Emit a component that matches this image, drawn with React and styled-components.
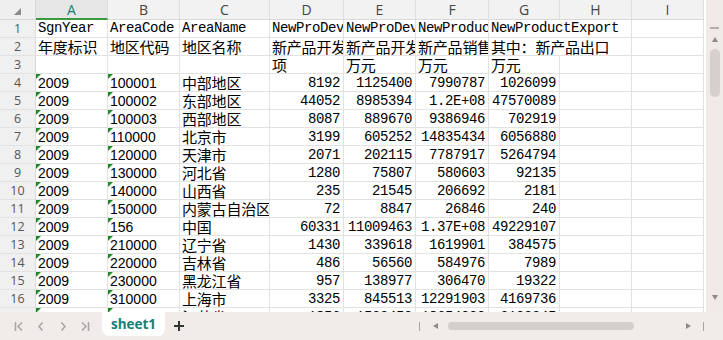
import React from 'react'
import styled, { createGlobalStyle, css } from 'styled-components'

const GlobalStyle = createGlobalStyle`
  html, body, #root { margin: 0; padding: 0; height: 100%; }
  body { overflow: hidden; background: #fff; font-family: "Liberation Sans", Arial, sans-serif; }
`

const COLS = ['A', 'B', 'C', 'D', 'E', 'F', 'G', 'H', 'I']

const data = [
  [['SgnYear', 'mono'], ['AreaCode', 'mono'], ['AreaName', 'mono'], ['NewProDevProjects', 'mono'], ['NewProDevExpenditure', 'mono'], ['NewProductSales', 'mono'], ['NewProductExport', 'mono', true]],
  [['年度标识', 'cjk'], ['地区代码', 'cjk'], ['地区名称', 'cjk'], ['新产品开发项目数', 'cjk'], ['新产品开发经费支出', 'cjk'], ['新产品销售收入', 'cjk'], ['其中：新产品出口', 'cjk', true]],
  [['', 'mono'], ['', 'mono'], ['', 'mono'], ['项', 'cjk'], ['万元', 'cjk'], ['万元', 'cjk'], ['万元', 'cjk']],
]

const values = [
  ['100001', '中部地区', '8192', '1125400', '7990787', '1026099'],
  ['100002', '东部地区', '44052', '8985394', '1.2E+08', '47570089'],
  ['100003', '西部地区', '8087', '889670', '9386946', '702919'],
  ['110000', '北京市', '3199', '605252', '14835434', '6056880'],
  ['120000', '天津市', '2071', '202115', '7787917', '5264794'],
  ['130000', '河北省', '1280', '75807', '580603', '92135'],
  ['140000', '山西省', '235', '21545', '206692', '2181'],
  ['150000', '内蒙古自治区', '72', '8847', '26846', '240'],
  ['156', '中国', '60331', '11009463', '1.37E+08', '49229107'],
  ['210000', '辽宁省', '1430', '339618', '1619901', '384575'],
  ['220000', '吉林省', '486', '56560', '584976', '7989'],
  ['230000', '黑龙江省', '957', '138977', '306470', '19322'],
  ['310000', '上海市', '3325', '845513', '12291903', '4169736'],
  ['320000', '江苏省', '1856', '1523450', '18654320', '6102345'],
]

values.forEach(v => {
  data.push([
    ['2009', 'text'], [v[0], 'text'], [v[1], 'cjk'],
    [v[2], 'num'], [v[3], 'num'], [v[4], 'num'], [v[5], 'num'],
  ])
})

const Page = styled.div`
  width: 723px;
  height: 100vh;
  display: flex;
  flex-direction: column;
  overflow: hidden;
`

const Main = styled.div`
  flex: 1;
  min-height: 0;
  display: flex;
`

const Sheet = styled.div`
  flex: 1;
  overflow: hidden;
  display: grid;
  grid-template-columns: 36px 72px 72px 90px 74px 72px 73px 71px 72px 1fr;
  grid-auto-rows: 18px;
  grid-template-rows: 20px;
  align-content: start;
  background: #fff;
`

const Corner = styled.div`
  background: #efefef;
  border-right: 1px solid #d9d9d9;
  border-bottom: 1px solid #d9d9d9;
  box-sizing: border-box;
  position: relative;
  &::after {
    content: '';
    position: absolute;
    left: 14px;
    top: 8px;
    border-style: solid;
    border-width: 0 0 7px 7px;
    border-color: transparent transparent #8a8a8a transparent;
  }
`

const ColHead = styled.div`
  box-sizing: border-box;
  display: flex;
  align-items: center;
  justify-content: center;
  font-family: "Open Sans", "Noto Sans", sans-serif;
  font-size: 14px;
  color: #444;
  background: #f2f2f2;
  border-right: 1px solid #dedede;
  border-bottom: 1px solid #d9d9d9;
  ${p => p.$active && css`
    color: #17806f;
    background: #e6e6e6;
    border-bottom: 2px solid #3b9a3b;
  `}
`

const RowHead = styled.div`
  box-sizing: border-box;
  display: flex;
  align-items: center;
  justify-content: center;
  font-family: "Open Sans", "Noto Sans", sans-serif;
  font-size: 12.5px;
  color: #555;
  background: #f0f0f0;
  border-right: 1px solid #d9d9d9;
  border-bottom: 1px solid #e2e2e2;
`

const Cell = styled.div`
  box-sizing: border-box;
  position: relative;
  border-right: 1px solid #e2e2e2;
  border-bottom: 1px solid #e2e2e2;
  white-space: nowrap;
  overflow: hidden;
  line-height: 17px;
  color: #000;
  padding: 0 2px;
  font-family: "Liberation Mono", "Courier New", monospace;
  font-size: 14px;
  letter-spacing: -0.4px;
  ${p => p.$kind === 'cjk' && css`
    font-family: "Noto Sans CJK SC", sans-serif;
    font-size: 15px;
    letter-spacing: -0.2px;
  `}
  ${p => p.$kind === 'text' && css`
    font-family: "Liberation Sans", Arial, sans-serif;
    font-size: 14px;
    letter-spacing: 0;
    padding-top: 1px;
    line-height: 16px;
    &::before {
      content: '';
      position: absolute;
      left: 0;
      top: 0;
      border-style: solid;
      border-width: 5px 5px 0 0;
      border-color: #1f8a2a transparent transparent transparent;
    }
  `}
  ${p => p.$kind === 'num' && css`
    text-align: right;
    padding-right: 3px;
    padding-top: 1px;
    line-height: 16px;
  `}
  ${p => p.$spill && css`
    overflow: visible;
    border-right-color: transparent;
    z-index: 1;
  `}
`

const VScroll = styled.div`
  width: 17px;
  margin-left: 2px;
  background: #efe9e7;
  display: flex;
  flex-direction: column;
  align-items: center;
  padding-top: 27px;
  box-sizing: border-box;
`

const Dash = styled.div`
  width: 9px;
  height: 2px;
  margin-bottom: 8px;
  background: #b4aeac;
`

const Arrow = styled.div`
  width: 0;
  height: 0;
  border-style: solid;
  ${p => p.$dir === 'up' && css`
    border-width: 0 3.5px 5px 3.5px;
    border-color: transparent transparent #8f8a88 transparent;
  `}
  ${p => p.$dir === 'down' && css`
    border-width: 5px 3.5px 0 3.5px;
    border-color: #8f8a88 transparent transparent transparent;
    margin-top: auto;
    margin-bottom: 12px;
  `}
  ${p => p.$dir === 'left' && css`
    border-width: 3.5px 5px 3.5px 0;
    border-color: transparent #8f8a88 transparent transparent;
    margin: 0 10px 0 13px;
  `}
  ${p => p.$dir === 'right' && css`
    border-width: 3.5px 0 3.5px 5px;
    border-color: transparent transparent transparent #8f8a88;
    margin: 0 12px 0 52px;
  `}
`

const VThumb = styled.div`
  width: 10px;
  height: 48px;
  margin-top: 7px;
  border-radius: 5px;
  background: #d5cfcd;
`

const BottomBar = styled.div`
  height: 28px;
  flex-shrink: 0;
  background: #f1ecea;
  display: flex;
  align-items: flex-start;
  padding-left: 14px;
`

const NavGroup = styled.div`
  display: flex;
  align-items: center;
  gap: 12px;
  height: 28px;
`

const Tab = styled.div`
  margin-left: 12px;
  width: 63px;
  height: 24px;
  background: #fff;
  border-radius: 0 0 7px 7px;
  display: flex;
  align-items: center;
  justify-content: center;
  font-family: "Open Sans", "Noto Sans", sans-serif;
  font-weight: 700;
  font-size: 13.5px;
  color: #17806f;
`

const Plus = styled.div`
  margin-left: 8px;
  height: 28px;
  display: flex;
  align-items: center;
`

const HScroll = styled.div`
  margin-left: auto;
  height: 28px;
  display: flex;
  align-items: center;
  padding-right: 19px;
`

const Bar = styled.div`
  width: 1px;
  height: 9px;
  background: #a8a3a1;
`

const HThumb = styled.div`
  width: 186px;
  height: 8px;
  border-radius: 4px;
  background: #d4cfcd;
`

const Nav = ({ d, bar }) => (
  <svg width="10" height="11" viewBox="0 0 10 11">
    {bar === 'left' && <line x1="1.5" y1="1" x2="1.5" y2="10" stroke="#a3a3a3" strokeWidth="1.5" />}
    {bar === 'right' && <line x1="8.5" y1="1" x2="8.5" y2="10" stroke="#a3a3a3" strokeWidth="1.5" />}
    <polyline points={d} fill="none" stroke="#a3a3a3" strokeWidth="1.5" />
  </svg>
)

const App = () => {
  return (
    <>
      <GlobalStyle />
      <Page>
        <Main>
          <Sheet>
            <Corner />
            {COLS.map(c => (
              <ColHead key={c} $active={c === 'A'}>{c}</ColHead>
            ))}
            {data.map((row, i) => (
              <React.Fragment key={i}>
                <RowHead>{i + 1}</RowHead>
                {COLS.map((c, j) => {
                  const cell = row[j]
                  if (!cell) return <Cell key={c} />
                  return (
                    <Cell key={c} $kind={cell[1]} $spill={cell[2]}>{cell[0]}</Cell>
                  )
                })}
              </React.Fragment>
            ))}
          </Sheet>
          <VScroll>
            <Dash />
            <Arrow $dir="up" />
            <VThumb />
            <Arrow $dir="down" />
          </VScroll>
        </Main>
        <BottomBar>
          <NavGroup>
            <Nav bar="left" d="8,1.5 4,5.5 8,9.5" />
            <Nav d="6.5,1.5 3,5.5 6.5,9.5" />
            <Nav d="3.5,1.5 7,5.5 3.5,9.5" />
            <Nav bar="right" d="2,1.5 6,5.5 2,9.5" />
          </NavGroup>
          <Tab>sheet1</Tab>
          <Plus>
            <svg width="12" height="12" viewBox="0 0 12 12">
              <path d="M6 1v10M1 6h10" stroke="#333" strokeWidth="2" />
            </svg>
          </Plus>
          <HScroll>
            <Bar />
            <Arrow $dir="left" />
            <HThumb />
            <Arrow $dir="right" />
            <Bar />
          </HScroll>
        </BottomBar>
      </Page>
    </>
  )
}

export default App
